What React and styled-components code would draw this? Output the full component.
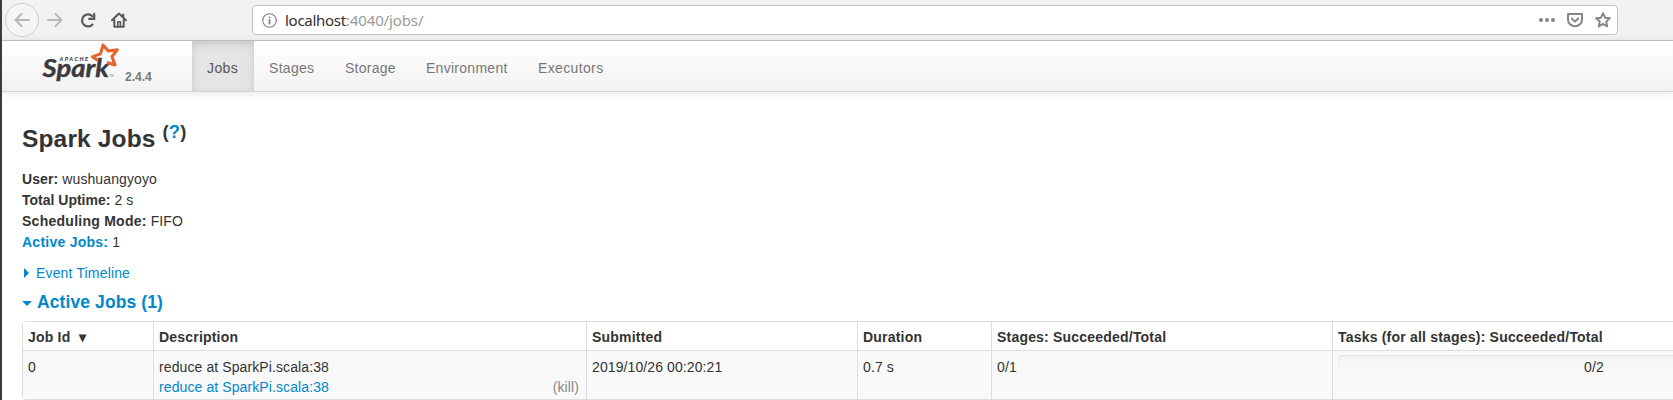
import React from 'react';
import styled, { createGlobalStyle } from 'styled-components';

const Global = createGlobalStyle`
  * { box-sizing: border-box; }
  html, body { margin: 0; height: 400px; overflow: hidden; background: #fff; }
  body {
    font: 14px/20px "Liberation Sans", Arial, sans-serif;
    color: #333;
  }
`;
const Window = styled.div`
  width: 1673px;
  height: 400px;
  overflow: hidden;
  border-left: 2px solid #3c3b3a;
`;
const Toolbar = styled.div`
  display: flex;
  align-items: center;
  height: 41px;
  padding-left: 3px;
  background: #f3f2f1;
  border-bottom: 1px solid #c4c1be;
`;
const BackButton = styled.div`
  display: flex;
  align-items: center;
  justify-content: center;
  width: 34px;
  height: 34px;
  border: 1px solid #cfcdcb;
  border-radius: 50%;
  background: #f6f5f4;
`;
const Tool = styled.div`
  display: flex;
  margin-left: ${(p) => p.$gap}px;
`;
const AddressBar = styled.div`
  display: flex;
  align-items: center;
  width: 1366px;
  height: 30px;
  margin-left: 125px;
  padding: 0 6px 0 9px;
  background: #fff;
  border: 1px solid #c3bfbb;
  border-radius: 4px;
`;
const Url = styled.div`
  flex: 1;
  margin-left: 8px;
  font: 15px/28px "Noto Sans", "Open Sans", sans-serif;
  letter-spacing: -0.12px;
  color: #9a9a9a;
`;
const Host = styled.span`
  letter-spacing: -0.28px;
  color: #2f2f2f;
`;
const Actions = styled.div`
  display: flex;
  align-items: center;
  gap: 12px;
`;
const Navbar = styled.nav`
  display: flex;
  height: 51px;
  background: linear-gradient(#fff, #f2f2f2);
  border-bottom: 1px solid #d4d4d4;
  box-shadow: 0 1px 10px rgba(0, 0, 0, 0.1);
`;
const Brand = styled.div`
  display: flex;
  align-items: flex-start;
  width: 190px;
  padding-left: 38px;
`;
const Version = styled.span`
  margin: 26px 0 0 3px;
  font-size: 12px;
  font-weight: bold;
  color: #777;
`;
const Tab = styled.a`
  width: ${(p) => p.$width}px;
  padding: 17px 0 13px 15px;
  letter-spacing: ${(p) => p.$spacing}px;
  color: ${(p) => (p.$active ? '#555' : '#777')};
  background: ${(p) => (p.$active ? '#e5e5e5' : 'transparent')};
  box-shadow: ${(p) => (p.$active ? 'inset 0 3px 8px rgba(0,0,0,.125)' : 'none')};
`;
const Content = styled.main`
  padding: 27px 0 0 20px;
`;
const Title = styled.h3`
  margin: 0;
  font-size: 24.5px;
  line-height: 40px;
  letter-spacing: 0.15px;
`;
const Help = styled.sup`
  position: relative;
  top: -9px;
  font-size: 18.4px;
  line-height: 0;
  vertical-align: baseline;
`;
const Link = styled.a`
  color: #08c;
`;
const Summary = styled.ul`
  margin: 10px 0 0;
  padding: 0;
  list-style: none;
`;
const SummaryItem = styled.li`
  height: 21px;
  line-height: 21px;
  letter-spacing: 0.1px;
`;
const Label = styled.b`
  letter-spacing: ${(p) => p.$spacing}px;
`;
const Toggle = styled.div`
  display: flex;
  align-items: center;
  height: 20px;
  margin-top: ${(p) => (p.$large ? 9 : 10)}px;
  font-size: ${(p) => (p.$large ? 17.5 : 14)}px;
  font-weight: ${(p) => (p.$large ? 'bold' : 'normal')};
  letter-spacing: ${(p) => (p.$large ? 0.1 : 0.16)}px;
  color: #08c;
`;
const ArrowRight = styled.i`
  margin: 0 7px 0 2px;
  border: 5px solid transparent;
  border-left-color: #08c;
  border-right-width: 0;
`;
const ArrowDown = styled.i`
  margin: 3px 5px 0 0;
  border: 5px solid transparent;
  border-top-color: #08c;
  border-bottom-width: 0;
`;
const Table = styled.div`
  width: 1744px;
  margin-top: 9px;
  border: 1px solid #ddd;
  border-radius: 4px;
  overflow: hidden;
`;
const Row = styled.div`
  display: grid;
  grid-template-columns: 131px 433px 271px 134px 341px 1fr;
  height: ${(p) => (p.$head ? 28 : 49)}px;
  font-weight: ${(p) => (p.$head ? 'bold' : 'normal')};
  letter-spacing: ${(p) => (p.$head ? 0.2 : 0.1)}px;
  background: ${(p) => (p.$head ? '#fff' : '#f9f9f9')};
  border-top: ${(p) => (p.$head ? '0' : '1px solid #ddd')};
`;
const Cell = styled.div`
  padding: ${(p) => (p.$head ? 5 : 6)}px 7px 2px 5px;
  border-right: 1px solid #ddd;
  white-space: nowrap;
`;
const Sort = styled.span`
  margin-left: 4px;
`;
const JobLine = styled.div`
  display: flex;
  justify-content: space-between;
`;
const Kill = styled.span`
  color: #888;
`;
const Progress = styled.div`
  width: 512px;
  height: 20px;
  margin-top: -2px;
  padding-top: 2px;
  text-align: center;
  border-radius: 4px;
  background: linear-gradient(#f5f5f5, #f9f9f9);
  box-shadow: inset 0 1px 2px rgba(0, 0, 0, 0.1);
`;

const Icon = ({ size = 16, color = '#5a5a59', width = 2, children }) => (
  <svg width={size} height={size} viewBox="0 0 16 16" fill="none" stroke={color}
    strokeWidth={width} strokeLinecap="round" strokeLinejoin="round">{children}</svg>
);

const SparkLogo = () => (
  <svg width="82" height="50" viewBox="0 0 82 50">
    <text x="19.5" y="19.5" fontFamily="Lato" fontSize="5.6" fontWeight="900" fontStyle="italic"
      textLength="28.5" fill="#3c3a3e">APACHE</text>
    <text x="2.5" y="36" fontFamily="Lato" fontSize="25" fontWeight="bold" fontStyle="italic"
      textLength="66.5" lengthAdjust="spacingAndGlyphs" fill="#3c3a3e" stroke="#3c3a3e" strokeWidth=".4">Spark</text>
    <text x="69" y="36" fontFamily="Lato" fontSize="3" fill="#777">TM</text>
    <path d="M58 19.5 L52.3 15.8 L60.5 12.8 L63 4 L68.3 10 L77.3 8.8 L72 15.5 L75 24 L67 21.5"
      fill="none" stroke="#e8622c" strokeWidth="3" strokeLinejoin="round" />
  </svg>
);

const tabs = [
  ['Jobs', 62, 0.4], ['Stages', 76, 0.3], ['Storage', 81, 0.25],
  ['Environment', 112, 0.28], ['Executors', 95, 0.36],
];

export default function App() {
  return (
    <Window>
      <Global />
      <Toolbar>
        <BackButton>
          <Icon color="#b9b8b7"><path d="M15 8H1.5M7.5 2L1.5 8l6 6" /></Icon>
        </BackButton>
        <Tool $gap={8}><Icon color="#b9b8b7"><path d="M1 8h13.5M8.5 2l6 6-6 6" /></Icon></Tool>
        <Tool $gap={17}>
          <Icon width={2.2}>
            <path d="M13 11.8A6 6 0 1 1 13 5" strokeLinecap="butt" />
            <path d="M14.2 1.8v5.1H9.2" strokeLinejoin="miter" />
          </Icon>
        </Tool>
        <Tool $gap={15}>
          <Icon>
            <path d="M1 8.3l7-6.8 7 6.8M3.3 8v6.8h9.4V8M12.3 2.6v2" />
            <path d="M6.8 14V9.8h2.6V14" strokeWidth="1.6" />
          </Icon>
        </Tool>
        <AddressBar>
          <Icon size={15} color="#808080" width={1.2}>
            <circle cx="8" cy="8" r="7.2" /><path d="M8 7.3v4M8 4.6v.2" strokeWidth="1.8" />
          </Icon>
          <Url><Host>localhost</Host>:4040/jobs/</Url>
          <Actions>
            <Icon color="#858585" width={0}>
              <g fill="#858585"><circle cx="2" cy="8" r="2" /><circle cx="8" cy="8" r="2" /><circle cx="14" cy="8" r="2" /></g>
            </Icon>
            <Icon color="#858585">
              <path d="M1 2h14v5.5a7 6.8 0 0 1-14 0zM4.8 6.5L8 9.6l3.2-3.1" />
            </Icon>
            <Icon color="#858585" width={1.9}>
              <path d="M8 1.2l2 4.5 4.9.5-3.7 3.3 1.1 4.9L8 11.9l-4.3 2.5 1.1-4.9L1.1 6.2 6 5.7z" />
            </Icon>
          </Actions>
        </AddressBar>
      </Toolbar>
      <Navbar>
        <Brand><SparkLogo /><Version>2.4.4</Version></Brand>
        {tabs.map(([name, width, spacing], i) => (
          <Tab key={name} $active={i === 0} $width={width} $spacing={spacing}>{name}</Tab>
        ))}
      </Navbar>
      <Content>
        <Title>Spark Jobs <Help>(<Link>?</Link>)</Help></Title>
        <Summary>
          <SummaryItem><Label $spacing={0.1}>User:</Label> wushuangyoyo</SummaryItem>
          <SummaryItem><Label $spacing={0}>Total Uptime:</Label> 2 s</SummaryItem>
          <SummaryItem><Label $spacing={0.26}>Scheduling Mode:</Label> FIFO</SummaryItem>
          <SummaryItem><Link><Label $spacing={0.25}>Active Jobs:</Label></Link> 1</SummaryItem>
        </Summary>
        <Toggle><ArrowRight />Event Timeline</Toggle>
        <Toggle $large><ArrowDown />Active Jobs (1)</Toggle>
        <Table>
          <Row $head>
            <Cell $head>Job Id <Sort>▾</Sort></Cell>
            <Cell $head>Description</Cell>
            <Cell $head>Submitted</Cell>
            <Cell $head>Duration</Cell>
            <Cell $head>Stages: Succeeded/Total</Cell>
            <Cell $head>Tasks (for all stages): Succeeded/Total</Cell>
          </Row>
          <Row>
            <Cell>0</Cell>
            <Cell>
              <div>reduce at SparkPi.scala:38</div>
              <JobLine><Link>reduce at SparkPi.scala:38</Link><Kill>(kill)</Kill></JobLine>
            </Cell>
            <Cell>2019/10/26 00:20:21</Cell>
            <Cell>0.7 s</Cell>
            <Cell>0/1</Cell>
            <Cell><Progress>0/2</Progress></Cell>
          </Row>
        </Table>
      </Content>
    </Window>
  );
}
